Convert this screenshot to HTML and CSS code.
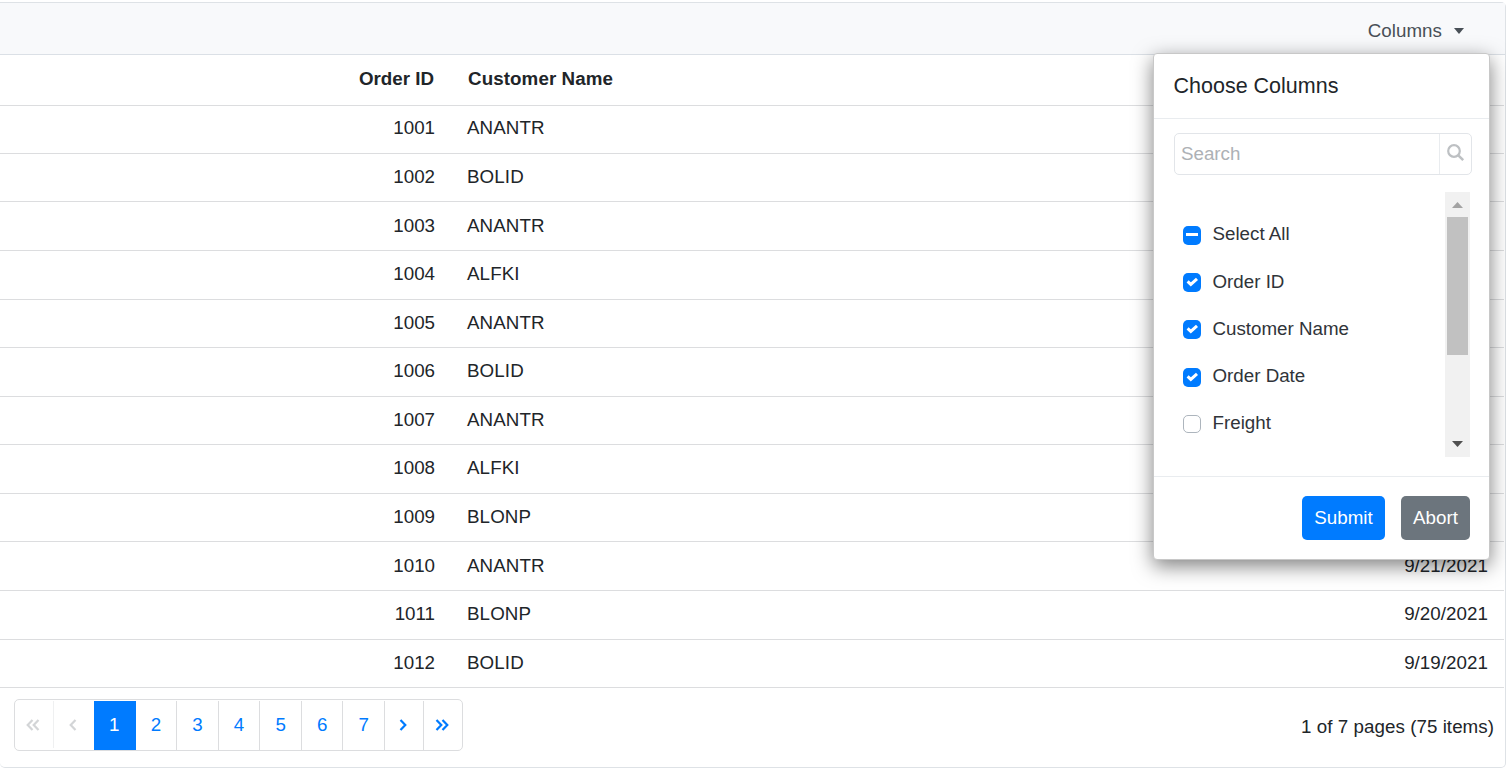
FILE: index.html
```
<!DOCTYPE html>
<html lang="en">
<head>
<meta charset="utf-8">
<title>Orders</title>
<link rel="stylesheet" href="styles.css">
</head>
<body>
<div class="grid">
  <div class="toolbar">
    <button class="columns-btn">Columns <span class="caret"></span></button>
    <div class="chooser">
      <div class="chooser-title">Choose Columns</div>
      <div class="chooser-body">
        <div class="search">
          <span class="search-text">Search</span>
          <span class="search-icon"><svg width="18" height="18" viewBox="0 0 18 18" fill="none" stroke="#bdc0c3" stroke-width="2.2"><circle cx="7" cy="7" r="5.8"/><path d="M11.3 11.3L16.2 16.2" stroke-width="2.5"/></svg></span>
        </div>
        <div class="list">
          <div class="options">
            <div class="option"><span class="box on"><svg width="18" height="19" viewBox="0 0 18 19"><path d="M3 7h12v3H3z" fill="#fff"/></svg></span>Select All</div>
            <div class="option"><span class="box on"><svg width="18" height="19" viewBox="0 0 18 19"><path d="M4.6 8.4L7.8 11.4L14 5.8" fill="none" stroke="#fff" stroke-width="3"/></svg></span>Order ID</div>
            <div class="option"><span class="box on"><svg width="18" height="19" viewBox="0 0 18 19"><path d="M4.6 8.4L7.8 11.4L14 5.8" fill="none" stroke="#fff" stroke-width="3"/></svg></span>Customer Name</div>
            <div class="option"><span class="box on"><svg width="18" height="19" viewBox="0 0 18 19"><path d="M4.6 8.4L7.8 11.4L14 5.8" fill="none" stroke="#fff" stroke-width="3"/></svg></span>Order Date</div>
            <div class="option"><span class="box"></span>Freight</div>
          </div>
          <div class="scrollbar">
            <svg class="arrow" width="25" height="25" viewBox="0 0 25 25"><path d="M7 16L12.5 10L18 16z" fill="#a3a3a3"/></svg>
            <div class="thumb"></div>
            <svg class="arrow" width="25" height="25" viewBox="0 0 25 25"><path d="M7 9L12.5 15L18 9z" fill="#505050"/></svg>
          </div>
        </div>
      </div>
      <div class="chooser-footer">
        <button class="btn primary">Submit</button>
        <button class="btn secondary">Abort</button>
      </div>
    </div>
  </div>
  <div class="row head"><span class="id">Order ID</span><span class="name">Customer Name</span><span class="date"></span></div>
  <div class="row"><span class="id">1001</span><span class="name">ANANTR</span><span class="date"></span></div>
  <div class="row"><span class="id">1002</span><span class="name">BOLID</span><span class="date"></span></div>
  <div class="row"><span class="id">1003</span><span class="name">ANANTR</span><span class="date"></span></div>
  <div class="row"><span class="id">1004</span><span class="name">ALFKI</span><span class="date"></span></div>
  <div class="row"><span class="id">1005</span><span class="name">ANANTR</span><span class="date"></span></div>
  <div class="row"><span class="id">1006</span><span class="name">BOLID</span><span class="date"></span></div>
  <div class="row"><span class="id">1007</span><span class="name">ANANTR</span><span class="date"></span></div>
  <div class="row"><span class="id">1008</span><span class="name">ALFKI</span><span class="date"></span></div>
  <div class="row"><span class="id">1009</span><span class="name">BLONP</span><span class="date"></span></div>
  <div class="row"><span class="id">1010</span><span class="name">ANANTR</span><span class="date">9/21/2021</span></div>
  <div class="row"><span class="id">1011</span><span class="name">BLONP</span><span class="date">9/20/2021</span></div>
  <div class="row"><span class="id">1012</span><span class="name">BOLID</span><span class="date">9/19/2021</span></div>
  <div class="pager">
    <div class="pages">
      <span class="page first off"><svg width="14" height="12" viewBox="0 0 14 12"><path d="M6.5 1L1.7 6L6.5 11M12.5 1L7.7 6L12.5 11"/></svg></span>
      <span class="page prev off"><svg width="8" height="12" viewBox="0 0 8 12"><path d="M6.5 1L1.7 6L6.5 11"/></svg></span>
      <span class="page current">1</span>
      <span class="page">2</span>
      <span class="page">3</span>
      <span class="page">4</span>
      <span class="page">5</span>
      <span class="page">6</span>
      <span class="page">7</span>
      <span class="page next"><svg width="8" height="12" viewBox="0 0 8 12"><path d="M1.5 1L6.3 6L1.5 11"/></svg></span>
      <span class="page last"><svg width="14" height="12" viewBox="0 0 14 12"><path d="M1.5 1L6.3 6L1.5 11M7.5 1L12.3 6L7.5 11"/></svg></span>
    </div>
    <span class="summary">1 of 7 pages (75 items)</span>
  </div>
</div>
</body>
</html>
```
FILE: styles.css
```
* { box-sizing: border-box; }
body {
  margin: 0;
  padding-top: 2px;
  height: 769px;
  overflow: hidden;
  background: #fff;
  color: #212529;
  font: 18.75px/24px "Liberation Sans", Arial, sans-serif;
}
button { font: inherit; border: 0; background: none; padding: 0; }
.grid {
  height: 766px;
  border: 1px solid #dee2e6;
  border-left: 0;
  border-radius: 0 5px 5px 5px;
}
.toolbar {
  position: relative;
  height: 52px;
  padding: 4px 41px 0 0;
  display: flex;
  justify-content: flex-end;
  align-items: center;
  background: #f8f9fb;
  border-bottom: 1px solid #dbe0e6;
}
.columns-btn { display: flex; align-items: center; gap: 12px; color: #495057; letter-spacing: .05px; }
.caret { border: 5.5px solid transparent; border-width: 6px 5.5px 0; border-top-color: #495057; }
.row {
  display: grid;
  grid-template-columns: 435px 1fr 300px;
  align-items: center;
  height: 48.57px;
  margin-right: 1px;
  padding-bottom: 1.3px;
  border-bottom: 1px solid #dcdddf;
}
.head { height: 51px; margin-bottom: -.66px; font-weight: bold; padding-bottom: 2px; }
.id { text-align: right; }
.head .id { padding-right: 1px; }
.name { padding-left: 32px; letter-spacing: .1px; }
.head .name { padding-left: 33px; }
.date { text-align: right; padding-right: 16px; letter-spacing: .05px; }
.pager {
  display: flex;
  align-items: flex-start;
  justify-content: space-between;
  padding: 11px 11px 0 14px;
}
.pages {
  display: flex;
  width: 449px;
  height: 52px;
  padding: 1px 0 0;
  border: 1px solid #dcdddf;
  border-radius: 5px;
}
.page {
  flex: 1 1 0;
  display: flex;
  align-items: center;
  justify-content: center;
  padding-bottom: 2px;
  color: #007bff;
  border-right: 1px solid #dcdddf;
}
.page svg { fill: none; stroke: #007bff; stroke-width: 2.2; }
.first, .prev, .next, .last { padding-right: 3px; }
.first { flex: 0 0 39px; height: 47px; padding-bottom: 0; border-color: #eff0f1; }
.prev { flex: 0 0 40px; border: 0; }
.next { flex: 0 0 39px; }
.last { flex: 0 0 38px; border: 0; }
.off svg { stroke: #d3d5d7; }
.current { color: #fff; background: #007bff; border-color: #007bff; }
.summary { margin-top: 16px; letter-spacing: .05px; }
.chooser {
  position: absolute;
  left: 1153px;
  top: 50px;
  width: 337px;
  height: 507px;
  background: #fff;
  border: 1px solid #c8c8c8;
  border-radius: 4px;
  box-shadow: 0 6px 20px rgba(0, 0, 0, .5);
}
.chooser-title {
  height: 65px;
  padding: 20px 20px 0 19.5px;
  font-size: 21.5px;
  border-bottom: 1px solid #e9ecef;
}
.chooser-body { height: 357px; padding: 14px 17px 0 20px; }
.search {
  display: flex;
  width: 298px;
  height: 42px;
  border: 1px solid #e2e5e9;
  border-radius: 5px;
  color: #adb1b5;
}
.search-text { flex: 1; padding: 8px 7px 8px 6px; border-right: 1px solid #e9ecef; }
.search-icon { width: 31px; padding: 10px 0 0 7px; }
.search-icon svg { display: block; }
.list { display: flex; justify-content: space-between; width: 296px; height: 265px; margin-top: 17px; }
.options { padding: 18.7px 0 0 9px; }
.option { display: flex; align-items: center; gap: 11.5px; height: 47.25px; color: #303439; }
.box { width: 18px; height: 18px; margin-top: 2px; border: 1px solid #adb5bd; border-radius: 5px; }
.box.on { height: 19px; border: 0; background: #007bff; }
.box svg { display: block; }
.scrollbar { width: 25px; background: #f1f1f1; display: flex; flex-direction: column; }
.arrow { flex: none; }
.thumb { height: 138px; margin: 0 2px auto; background: #c1c1c1; }
.chooser-footer {
  display: flex;
  justify-content: flex-end;
  gap: 16px;
  padding: 19px 19px 0;
  border-top: 1px solid #e9ecef;
}
.btn { height: 44px; color: #fff; border-radius: 5px; }
.primary { width: 83px; background: #007bff; }
.secondary { width: 69px; background: #6c757d; }
```
